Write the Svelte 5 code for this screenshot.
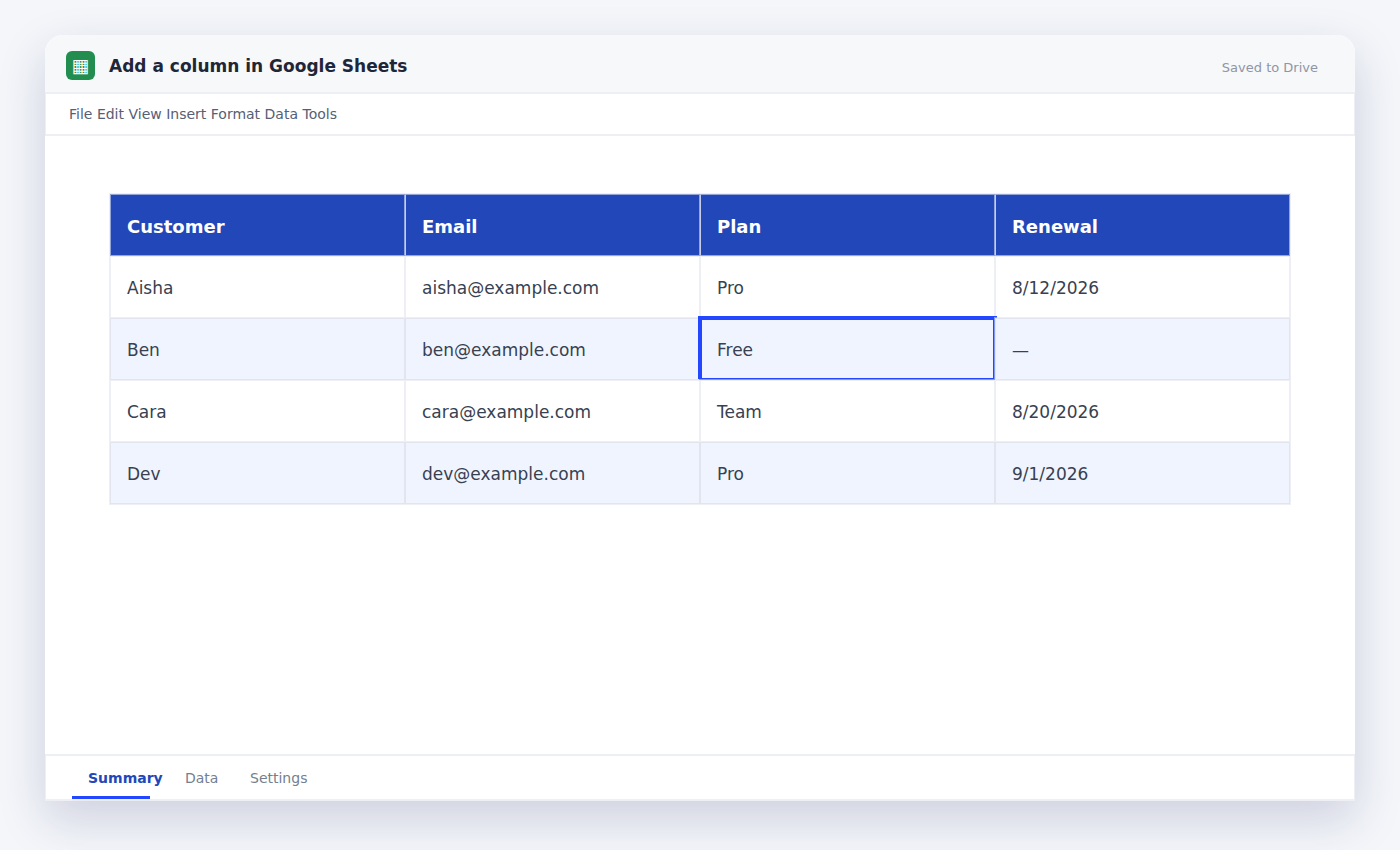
<script>
    const menus = ["File", "Edit", "View", "Insert", "Format", "Data", "Tools"];
    const columns = ["Customer", "Email", "Plan", "Renewal"];
    const rows = [
        ["Aisha", "aisha@example.com", "Pro", "8/12/2026"],
        ["Ben", "ben@example.com", "Free", "—"],
        ["Cara", "cara@example.com", "Team", "8/20/2026"],
        ["Dev", "dev@example.com", "Pro", "9/1/2026"],
    ];
    const tabs = ["Summary", "Data", "Settings"];

    let activeTab = $state("Summary");
    let selected = $state({ row: 1, col: 2 });
</script>

<main>
    <div class="window">
        <header>
            <span class="logo" aria-hidden="true">▦</span>
            <h1>Add a column in Google Sheets</h1>
            <span class="status">Saved to Drive</span>
        </header>

        <nav class="menu">
            {#each menus as menu}
                <button>{menu}</button>{" "}
            {/each}
        </nav>

        <section class="sheet">
            <table>
                <thead>
                    <tr>
                        {#each columns as column}
                            <th scope="col">{column}</th>
                        {/each}
                    </tr>
                </thead>
                <tbody>
                    {#each rows as row, r}
                        <tr>
                            {#each row as value, c}
                                <td
                                    class:selected={selected.row === r && selected.col === c}
                                    onclick={() => (selected = { row: r, col: c })}
                                >{value}</td>
                            {/each}
                        </tr>
                    {/each}
                </tbody>
            </table>
        </section>

        <footer>
            {#each tabs as tab}
                <button class:active={activeTab === tab} onclick={() => (activeTab = tab)}>{tab}</button>
            {/each}
        </footer>
    </div>
</main>

<style>
    :global(body) {
        background: #f4f6fa;
    }

    main {
        box-sizing: border-box;
        display: flex;
        min-height: 100vh;
        padding: 35px 45px 49px;
        font-family: "DejaVu Sans", sans-serif;
    }

    .window {
        flex: 1;
        display: flex;
        flex-direction: column;
        background: #ffffff;
        border-radius: 18px 18px 2px 2px;
        box-shadow: 0 18px 48px rgba(34, 38, 100, 0.18);
    }

    button {
        padding: 0;
        border: none;
        background: none;
        font: inherit;
        color: inherit;
        cursor: pointer;
    }

    header {
        display: flex;
        align-items: center;
        height: 57px;
        padding: 0 37px 0 21px;
        border-bottom: 2px solid #edeff4;
        border-radius: 18px 18px 0 0;
        background: #f7f8fa;
    }

    .logo {
        width: 29px;
        height: 29px;
        margin-top: 4px;
        border-radius: 6px;
        background: #218e50;
        color: #ffffff;
        font-size: 19px;
        line-height: 29px;
        text-align: center;
    }

    h1 {
        flex: 1;
        margin: 4px 0 0 14px;
        font-size: 17px;
        line-height: 20px;
        color: #1f2638;
    }

    .status {
        margin-top: 8px;
        font-size: 13px;
        line-height: 16px;
        color: #8f95a5;
    }

    .menu {
        height: 40px;
        padding: 0 23px;
        border: solid #edeff4;
        border-width: 0 1px 2px;
        font-size: 14px;
        line-height: 40px;
        color: #566074;
    }

    .sheet {
        flex: 1;
        padding: 57px 64px;
    }

    table {
        width: 100%;
        table-layout: fixed;
        border: 1px solid #eeeff4;
        border-collapse: separate;
        border-spacing: 0;
    }

    th,
    td {
        box-sizing: border-box;
        height: 62px;
        padding: 2px 16px 0;
        border: 1px solid #eeeff4;
        font-size: 17px;
        text-align: left;
        color: #374151;
    }

    th {
        border-color: #92a4d8;
        background: #2247b8;
        font-size: 18px;
        color: #ffffff;
    }

    th + th {
        border-left-color: #c5cce6;
    }

    tbody tr:nth-child(even) td {
        border-color: #e2e5ee;
        background: #eff4ff;
    }

    .selected {
        position: relative;
    }

    .selected::before {
        content: "";
        position: absolute;
        inset: -3px 0 0 -3px;
        border: solid #2247ff;
        border-width: 4px 1px 1px 4px;
        box-shadow: 1px 1px #8496f8;
    }

    /* top edge runs on over the next cell */
    .selected::after {
        content: "";
        position: absolute;
        top: -3px;
        right: -3px;
        width: 3px;
        height: 1px;
        border-bottom: 1px solid #8496f8;
        background: #2247ff;
    }

    footer {
        display: grid;
        grid-template-columns: 97px 65px auto;
        justify-content: start;
        height: 43px;
        padding: 0 42px;
        border: solid #edeff4;
        border-width: 2px 1px;
        border-radius: 0 0 2px 2px;
        font-size: 14px;
        text-align: left;
        color: #748091;
    }

    footer button {
        position: relative;
        text-align: left;
    }

    footer .active {
        font-weight: bold;
        color: #2247b8;
    }

    footer .active::after {
        content: "";
        position: absolute;
        bottom: 0;
        left: -16px;
        width: 78px;
        height: 3px;
        background: #2247ff;
    }
</style>
